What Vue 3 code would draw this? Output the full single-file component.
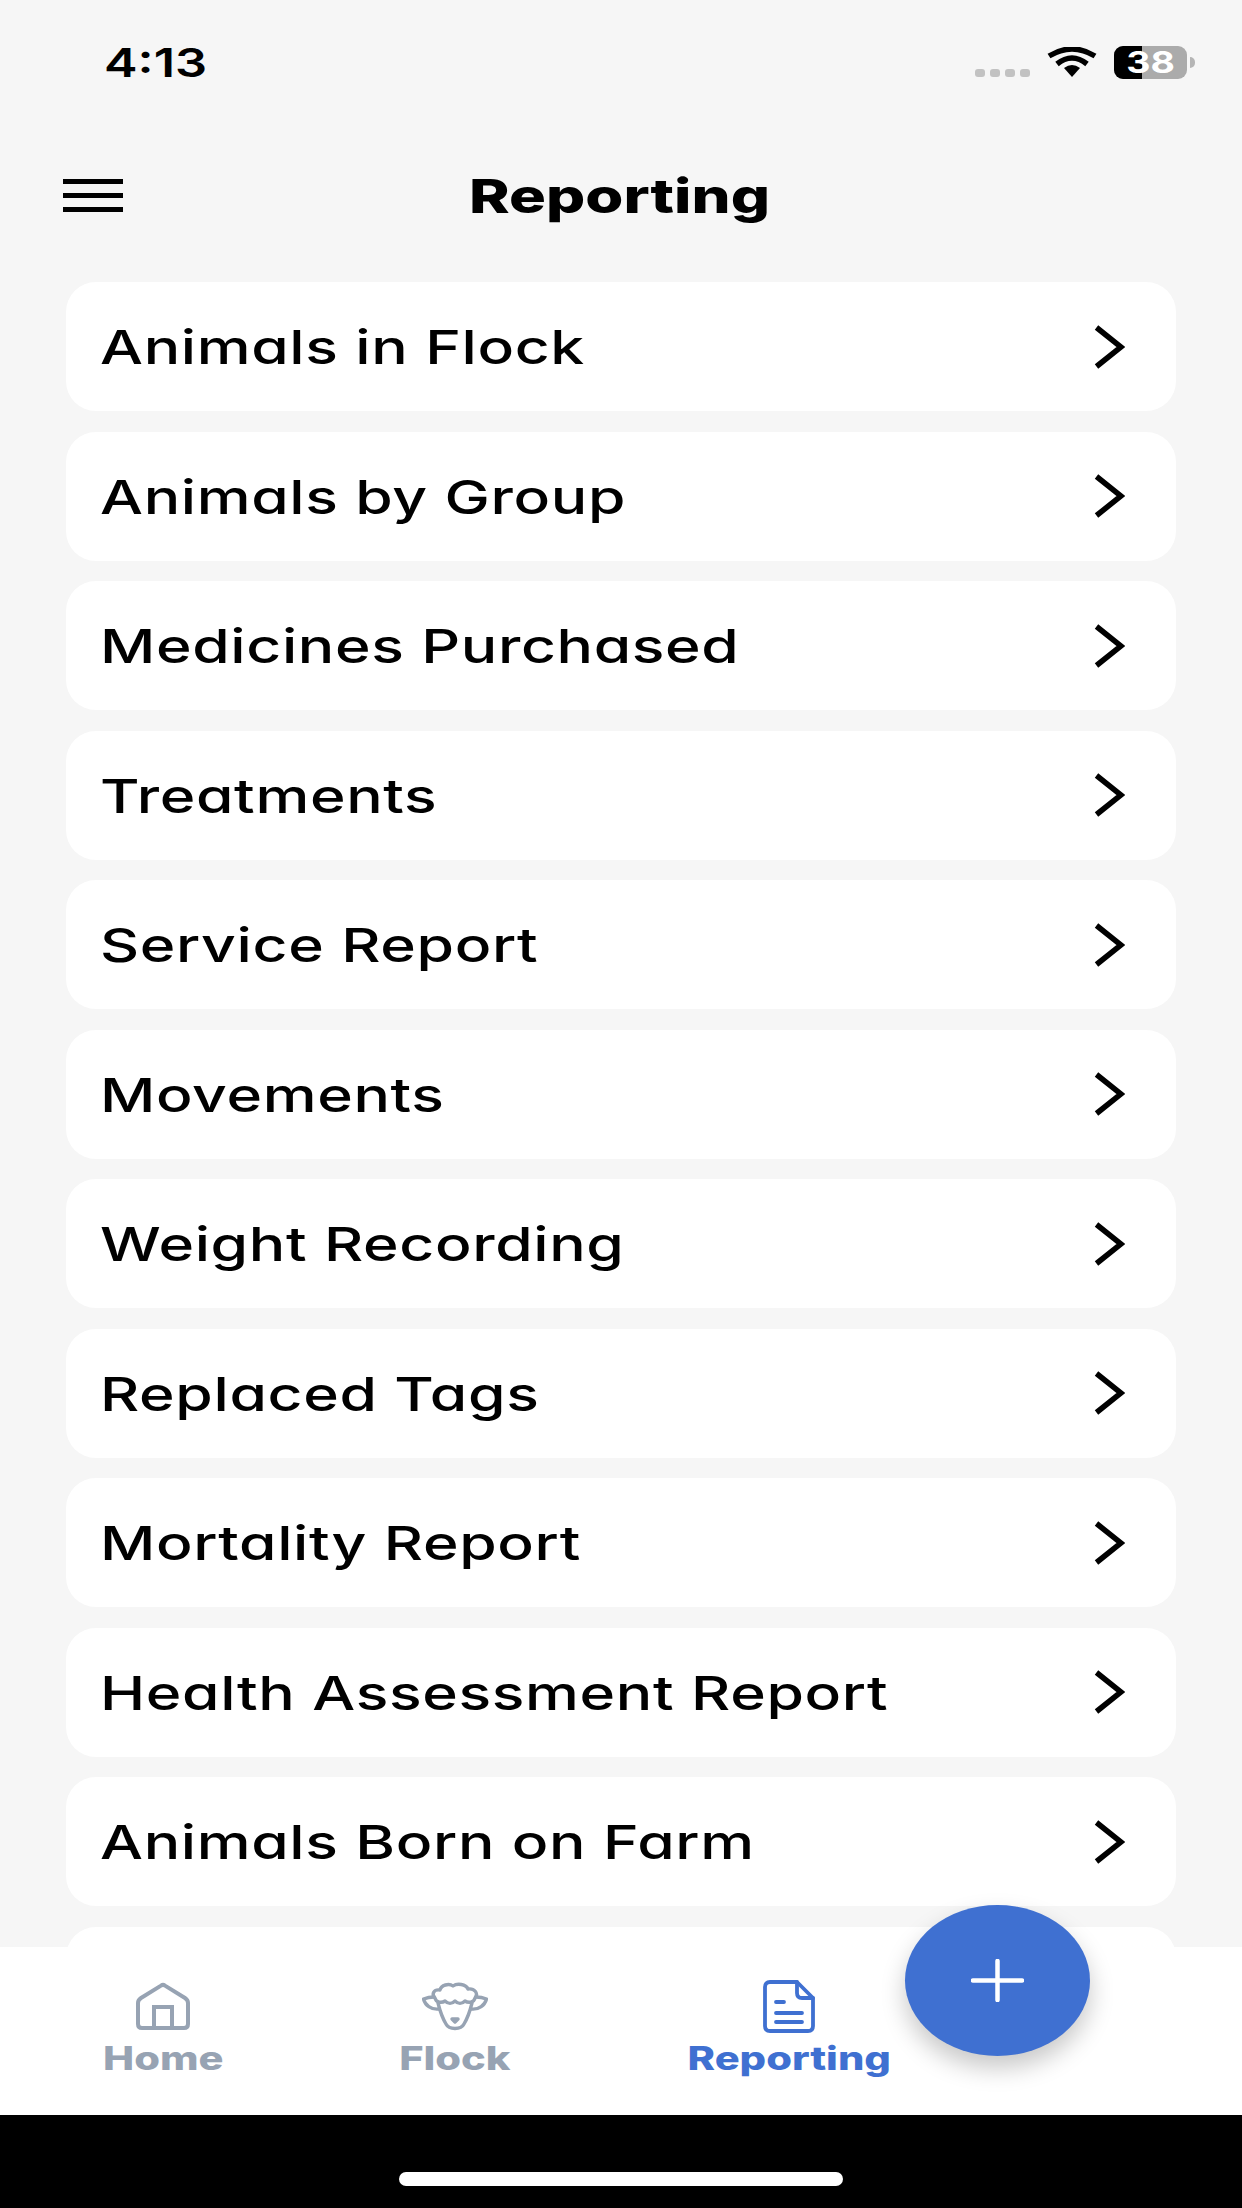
<script setup>
const reports = [
  'Animals in Flock',
  'Animals by Group',
  'Medicines Purchased',
  'Treatments',
  'Service Report',
  'Movements',
  'Weight Recording',
  'Replaced Tags',
  'Mortality Report',
  'Health Assessment Report',
  'Animals Born on Farm',
  ''
]
</script>

<template>
  <div class="screen">
    <div class="status">
      <span class="time">4:13</span>
      <div class="status-icons">
        <div class="signal"><i></i><i></i><i></i><i></i></div>
        <svg class="wifi" viewBox="0 0 50 30" width="50" height="30">
          <path d="M25 30 L17 21 Q25 15 33 21 Z" fill="#000" />
          <path d="M10 15 Q25 3 40 15" fill="none" stroke="#000" stroke-width="5.5" transform="translate(0 2)" />
          <path d="M2 7 Q25 -7 48 7" fill="none" stroke="#000" stroke-width="5.5" transform="translate(0 2)" />
        </svg>
        <div class="battery">
          <div class="battery-body">
            <div class="battery-fill"></div>
            <span class="battery-text">38</span>
          </div>
          <div class="battery-nub"></div>
        </div>
      </div>
    </div>

    <header class="header">
      <button class="menu"><i></i><i></i><i></i></button>
      <h1 class="title">Reporting</h1>
    </header>

    <div class="list">
      <div v-for="r in reports" :key="r" class="card">
        <span class="card-text">{{ r }}</span>
        <svg v-if="r" class="chev" viewBox="0 0 31 44" width="31" height="44">
          <path d="M2.5 2.5 L27 22 L2.5 41.5" fill="none" stroke="#000" stroke-width="5.5" />
        </svg>
      </div>
    </div>

    <nav class="tabs">
      <div class="tab">
        <svg class="ticon" viewBox="0 0 54 47" width="54" height="47">
          <path d="M25 2.6 Q27 1.2 29 2.6 L49 15 Q52 17 52 20 V41 Q52 45 48 45 H6 Q2 45 2 41 V20 Q2 17 5 15 Z" fill="none" stroke="#97a3b3" stroke-width="4" stroke-linejoin="round" />
          <path d="M18 45 V24 H36 V45" fill="none" stroke="#97a3b3" stroke-width="4" />
        </svg>
        <span class="tlabel">Home</span>
      </div>
      <div class="tab">
        <svg class="ticon" viewBox="0 0 66 47" width="66" height="47">
          <g fill="none" stroke="#97a3b3" stroke-width="3.4" stroke-linejoin="round" stroke-linecap="round">
            <path d="M13 15 C9 11 12 6 18 7 C19 2 27 0 31 3 C35 0 44 1 46 6 C52 5 57 10 53 15 C52 20 46 20 43 18 C40 21 36 21 33 18 C30 21 26 21 23 18 C20 20 14 20 13 15 Z" />
            <path d="M16 20 C18 28 21 36 24 41 C27 47 39 47 42 41 C45 36 48 28 50 20" />
            <path d="M12 14 C8 14 4 15 1.5 16 C3 22 9 27 17 26" />
            <path d="M54 14 C58 14 62 15 64.5 16 C63 22 57 27 49 26" />
            <path d="M30 36 H36 L33 39 Z" fill="#97a3b3" />
          </g>
        </svg>
        <span class="tlabel">Flock</span>
      </div>
      <div class="tab active">
        <svg class="ticon" viewBox="0 0 52 53" width="52" height="53">
          <g fill="none" stroke="#3f70d1" stroke-width="3.8" stroke-linejoin="round" stroke-linecap="round">
            <path d="M34 2 H7 Q2 2 2 7 V46 Q2 51 7 51 H45 Q50 51 50 46 V18 Z" />
            <path d="M34 2 V13 Q34 18 39 18 H50" />
            <path d="M13 22 H21 M13 33 H39 M13 42 H39" />
          </g>
        </svg>
        <span class="tlabel">Reporting</span>
      </div>
    </nav>

    <div class="nav-area">
      <div class="home-bar"></div>
    </div>

    <button class="fab">
      <svg viewBox="0 0 53 43" width="53" height="43">
        <path d="M26.5 2 V41 M2 21.5 H51" fill="none" stroke="#fff" stroke-width="4.5" stroke-linecap="round" />
      </svg>
    </button>
  </div>
</template>

<style scoped>
.screen {
  position: relative;
  width: 1242px;
  height: 2208px;
  overflow: hidden;
  background: #f6f6f6;
  display: flex;
  flex-direction: column;
  font-family: Inter, "Liberation Sans", sans-serif;
  font-feature-settings: "cv11";
  color: #000;
}
.status {
  height: 124px;
  flex: none;
  display: flex;
  justify-content: space-between;
  align-items: flex-start;
  padding: 46px 47px 0 104px;
  box-sizing: border-box;
}
.time {
  font-size: 40px;
  font-weight: 600;
  line-height: 34px;
  display: inline-block;
  transform: scaleX(1.26);
  transform-origin: left center;
}
.status-icons {
  display: flex;
  align-items: flex-start;
}
.signal {
  display: flex;
  gap: 5px;
  margin-top: 23px;
  margin-right: 17px;
}
.signal i {
  width: 10px;
  height: 8px;
  border-radius: 3px;
  background: #c2c2c2;
}
.wifi {
  margin-top: 1px;
  margin-right: 17px;
}
.battery {
  display: flex;
  align-items: center;
}
.battery-body {
  position: relative;
  width: 73px;
  height: 33px;
  border-radius: 9px;
  background: #ababab;
}
.battery-fill {
  width: 28px;
  height: 100%;
  border-radius: 9px 0 0 9px;
  background: #000;
}
.battery-text {
  position: absolute;
  left: 17px;
  top: 0;
  width: 38px;
  text-align: center;
  color: #fff;
  font-size: 30px;
  font-weight: 700;
  line-height: 33px;
  transform: scaleX(1.25);
}
.battery-nub {
  width: 5px;
  height: 11px;
  margin-left: 3px;
  border-radius: 0 5px 5px 0;
  background: #b5b5b5;
}
.header {
  position: relative;
  flex: none;
  height: 134px;
}
.menu {
  position: absolute;
  left: 63px;
  top: 55px;
  width: 60px;
  padding: 0;
  border: 0;
  background: none;
  display: flex;
  flex-direction: column;
  gap: 9px;
}
.menu i {
  height: 5px;
  background: #000;
}
.title {
  margin: 0;
  position: absolute;
  left: 469px;
  top: 42px;
  font-size: 47px;
  font-weight: 800;
  line-height: 60px;
  transform: scaleX(1.31);
  transform-origin: left center;
}
.list {
  flex: 1;
  min-height: 0;
  overflow: hidden;
  padding: 24px 66px 0;
  display: flex;
  flex-direction: column;
  gap: 20.5px;
}
.card {
  flex: none;
  height: 129px;
  border-radius: 30px;
  background: #fff;
  display: flex;
  align-items: center;
  justify-content: space-between;
  padding: 0 51px 0 34px;
}
.card-text {
  font-size: 47px;
  font-weight: 500;
  letter-spacing: 0.5px;
  display: inline-block;
  transform: scaleX(1.29);
  transform-origin: left center;
  white-space: nowrap;
}
.chev {
  flex: none;
}
.tabs {
  flex: none;
  height: 168px;
  background: #fff;
  display: grid;
  grid-template-columns: 326px 258px 410px;
  box-sizing: border-box;
  padding-top: 33px;
}
.tab {
  display: flex;
  flex-direction: column;
  align-items: center;
  color: #97a3b3;
}
.tab.active {
  color: #3f70d1;
}
.ticon {
  height: 53px;
  display: block;
}
.tlabel {
  margin-top: 6px;
  font-size: 32px;
  font-weight: 800;
  line-height: 40px;
  display: inline-block;
  transform: scaleX(1.3);
}
.nav-area {
  flex: none;
  height: 93px;
  background: #000;
  display: flex;
  justify-content: center;
  padding-top: 57px;
  box-sizing: border-box;
}
.home-bar {
  width: 444px;
  height: 14px;
  border-radius: 7px;
  background: #fff;
}
.fab {
  position: absolute;
  left: 905px;
  top: 1905px;
  width: 185px;
  height: 151px;
  border: 0;
  border-radius: 50%;
  background: #3f70d1;
  box-shadow: 0 12px 24px rgba(0, 0, 0, 0.22);
  display: flex;
  align-items: center;
  justify-content: center;
  padding: 0;
}
</style>
